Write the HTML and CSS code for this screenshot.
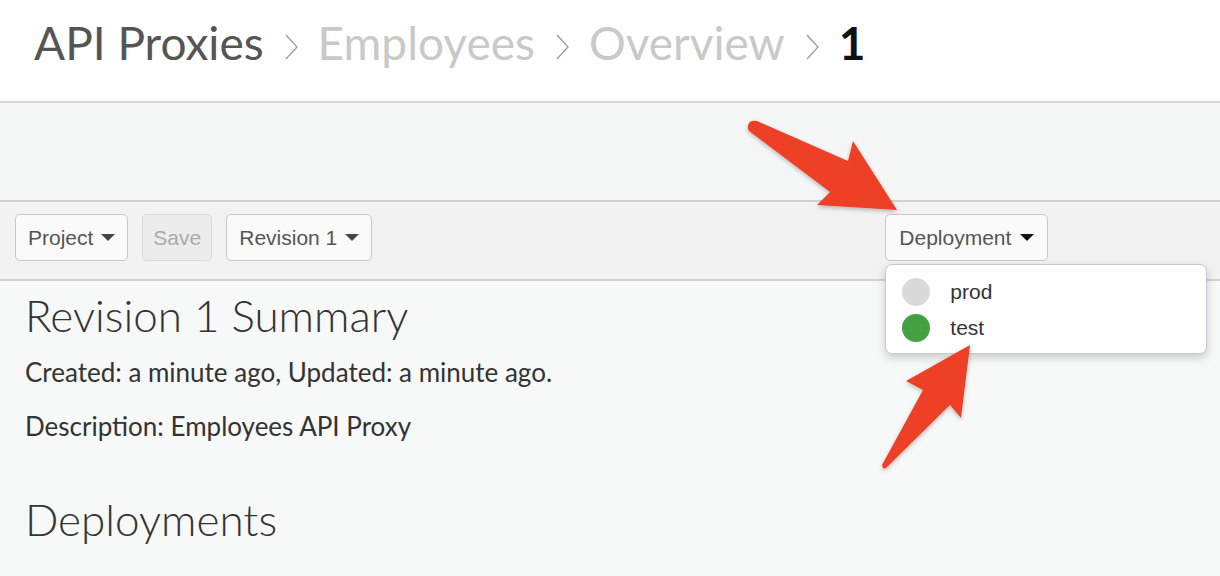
FILE: index.html
```html
<!DOCTYPE html>
<html>
<head>
<meta charset="utf-8">
<link rel="stylesheet" href="styles.css">
</head>
<body>
<header class="header">
  <nav class="crumbs">
    <span class="crumb crumb-first">API Proxies</span>
    <svg class="sep" width="13" height="26" viewBox="0 0 13 26"><polyline points="1,1 12,13 1,25" fill="none" stroke="#9c9c9c" stroke-width="1.3"/></svg>
    <span class="crumb crumb-muted">Employees</span>
    <svg class="sep" width="13" height="26" viewBox="0 0 13 26"><polyline points="1,1 12,13 1,25" fill="none" stroke="#9c9c9c" stroke-width="1.3"/></svg>
    <span class="crumb crumb-muted">Overview</span>
    <svg class="sep" width="13" height="26" viewBox="0 0 13 26"><polyline points="1,1 12,13 1,25" fill="none" stroke="#9c9c9c" stroke-width="1.3"/></svg>
    <span class="crumb crumb-current">1</span>
  </nav>
</header>
<div class="band"></div>
<div class="toolbar">
  <div class="btn-group">
    <button class="btn">Project <span class="caret"></span></button>
    <button class="btn btn-disabled">Save</button>
    <button class="btn">Revision 1 <span class="caret"></span></button>
  </div>
  <div class="deploy">
    <button class="btn btn-deploy">Deployment <span class="caret caret-dark"></span></button>
    <ul class="menu">
      <li class="menu-item"><span class="dot dot-off"></span>prod</li>
      <li class="menu-item"><span class="dot dot-on"></span>test</li>
    </ul>
  </div>
</div>
<main class="content">
  <h2 class="title">Revision 1 Summary</h2>
  <p class="meta">Created: a minute ago, Updated: a minute ago.</p>
  <p class="meta">Description: Employees API Proxy</p>
  <h2 class="title title-deploy">Deployments</h2>
</main>
<svg class="annot" width="1220" height="576" viewBox="0 0 1220 576">
  <defs>
    <filter id="sh" x="-20%" y="-20%" width="140%" height="140%">
      <feDropShadow dx="0" dy="2" stdDeviation="2" flood-color="#000" flood-opacity="0.25"/>
    </filter>
  </defs>
  <path filter="url(#sh)" fill="#ee4127" d="M750 122 Q753 120 757 121 L848 161 L853 141 L897 210 L817 205 L830 192 L749 131 Q746 126 750 122 Z"/>
  <path filter="url(#sh)" fill="#ee4127" d="M970 345 L961 418 L950 405 L887 467 Q883 471 882 465 L923 390 L906 381 Z"/>
</svg>
</body>
</html>
```

FILE: styles.css
```css
* { box-sizing: border-box; }
html, body { margin: 0; padding: 0; }
body {
  width: 1220px;
  height: 576px;
  overflow: hidden;
  background: #f7f8f8;
  font-family: Lato, "Liberation Sans", sans-serif;
  color: #333;
  position: relative;
}
.header {
  height: 103px;
  background: #fff;
  border-bottom: 2px solid #d6d8d8;
  padding: 15px 0 0 34px;
}
.crumbs {
  display: flex;
  align-items: center;
  font-size: 46px;
  line-height: 56px;
}
.crumb-first { color: #555; }
.crumb-muted { color: #c9c9c9; }
.crumb-current { color: #111; font-weight: 700; }
.sep {
  margin: 8px 20px 0 21px;
  flex: none;
}
.band {
  height: 97px;
  background: #f5f6f6;
}
.toolbar {
  height: 81px;
  background: #f2f2f2;
  border-top: 2px solid #cfd1d1;
  border-bottom: 2px solid #cfd1d1;
  display: flex;
  align-items: flex-start;
  padding: 12px 0 0 15px;
}
.btn-group { display: flex; gap: 14px; }
.btn {
  height: 47px;
  padding: 0 12px;
  border: 1px solid #c3c8cb;
  border-radius: 5px;
  background: #fafafa;
  font-family: "Liberation Sans", Arial, sans-serif;
  font-size: 21px;
  color: #555;
  display: flex;
  align-items: center;
  gap: 8px;
}
.btn-disabled {
  background: #ececec;
  color: #aaa;
  border-color: #d8dada;
  padding: 0 10px;
}
.btn-deploy { padding: 0 13px 0 13px; gap: 9px; }
.caret {
  width: 0;
  height: 0;
  border-left: 7px solid transparent;
  border-right: 7px solid transparent;
  border-top: 7px solid #444;
}
.caret-dark { border-top-color: #111; }
.deploy {
  position: relative;
  margin-left: 513px;
}
.menu {
  position: absolute;
  left: 0;
  top: 50px;
  width: 322px;
  height: 90px;
  margin: 0;
  padding: 9px 0 0 16px;
  list-style: none;
  background: #fff;
  border: 1px solid #c3cbce;
  border-radius: 7px;
  box-shadow: 0 4px 10px rgba(0,0,0,0.18);
  z-index: 2;
}
.menu-item {
  display: flex;
  align-items: center;
  height: 36px;
  font-family: "Liberation Sans", Arial, sans-serif;
  font-size: 21px;
  color: #333;
}
.dot {
  width: 28px;
  height: 28px;
  border-radius: 50%;
  margin-right: 20px;
}
.dot-off { background: #d9d9d9; }
.dot-on { background: #45a041; }
.content {
  padding: 0 25px;
}
.title {
  margin: 0;
  font-weight: 300;
  font-size: 44px;
  line-height: 53px;
  color: #333;
  padding-top: 8px;
  padding-bottom: 3px;
}
.meta {
  margin: 0;
  font-size: 26px;
  line-height: 54px;
  color: #333;
}
.title-deploy { padding-top: 40px; }
.annot {
  position: absolute;
  left: 0;
  top: 0;
  pointer-events: none;
  z-index: 5;
}
```
